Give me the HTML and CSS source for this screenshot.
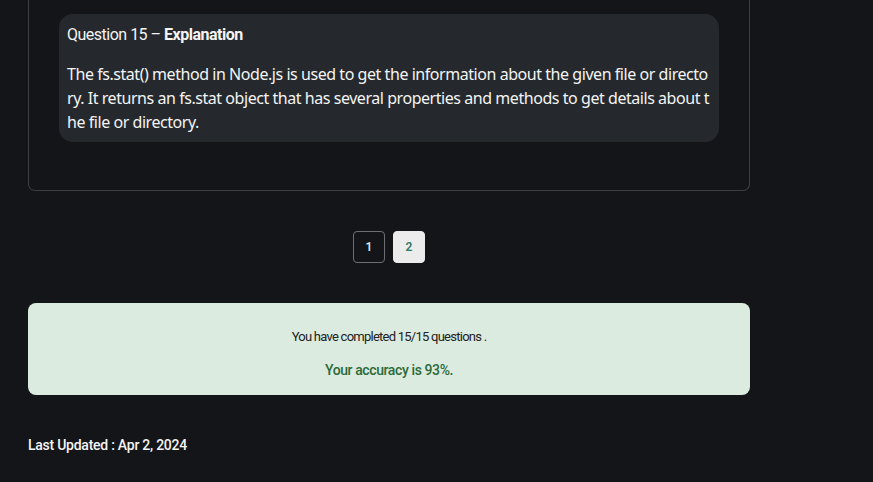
FILE: index.html
```html
<!DOCTYPE html>
<html lang="en">
<head>
<meta charset="utf-8">
<title>Quiz result</title>
<link rel="stylesheet" href="styles.css">
</head>
<body>
<main class="page">
  <section class="quiz-card">
    <div class="explanation">
      <h3 class="exp-title">Question 15 – <strong>Explanation</strong></h3>
      <p class="exp-text">The fs.stat() method in Node.js is used to get the information about the given file or directory. It returns an fs.stat object that has several properties and methods to get details about the file or directory.</p>
    </div>
  </section>
  <nav class="pagination">
    <button class="page-btn">1</button>
    <button class="page-btn active">2</button>
  </nav>
  <section class="result">
    <p class="result-line">You have completed 15/15 questions .</p>
    <p class="result-acc">Your accuracy is 93%.</p>
  </section>
  <p class="updated">Last Updated : Apr 2, 2024</p>
</main>
</body>
</html>
```
FILE: styles.css
```css
html, body {
  margin: 0;
  background: #141518;
  color: #f1f1f1;
  font-family: "Roboto", sans-serif;
}
.page {
  width: 722px;
  margin-left: 28px;
}
.quiz-card {
  border: 1px solid #3b3e42;
  border-top: none;
  border-radius: 0 0 7px 7px;
  padding: 14px 30px 48px 30px;
}
.explanation {
  background: #25292d;
  border-radius: 14px;
  padding: 10px 8px 8px 8px;
}
.exp-title {
  margin: 0 0 16px 0;
  font-family: "Roboto", sans-serif;
  font-size: 16px;
  font-weight: 400;
  line-height: 22px;
  letter-spacing: -0.5px;
  color: #f4f4f4;
}
.exp-title strong { font-weight: 700; }
.exp-text {
  margin: 0;
  font-family: "Noto Sans", sans-serif;
  font-size: 16px;
  line-height: 24px;
  letter-spacing: -0.45px;
  word-break: break-all;
  color: #f4f4f4;
}
.pagination {
  display: flex;
  justify-content: center;
  gap: 8px;
  margin-top: 40px;
}
.page-btn {
  width: 32px;
  height: 32px;
  border: 1px solid #6c6f73;
  border-radius: 4px;
  background: transparent;
  color: #dde3ea;
  font-family: "Roboto", sans-serif;
  font-size: 12px;
  font-weight: 600;
  padding: 0;
}
.page-btn.active {
  background: #ececec;
  border-color: #ececec;
  color: #2f7a64;
}
.result {
  margin-top: 40px;
  background: #dcebdf;
  border-radius: 8px;
  height: 92px;
  display: flex;
  flex-direction: column;
  align-items: center;
  padding-top: 24px;
  box-sizing: border-box;
}
.result-line {
  margin: 0;
  color: #222;
  font-family: "Roboto", sans-serif;
  font-size: 13px;
  letter-spacing: -0.75px;
  line-height: 20px;
}
.result-acc {
  margin: 13px 0 0 0;
  color: #2b6a3b;
  font-family: "Roboto", sans-serif;
  font-size: 14px;
  font-weight: 500;
  line-height: 20px;
  letter-spacing: -0.4px;
}
.updated {
  margin: 40px 0 0 0;
  font-family: "Roboto", sans-serif;
  font-size: 14px;
  font-weight: 500;
  letter-spacing: -0.25px;
  line-height: 20px;
  color: #f4f4f4;
}
```
